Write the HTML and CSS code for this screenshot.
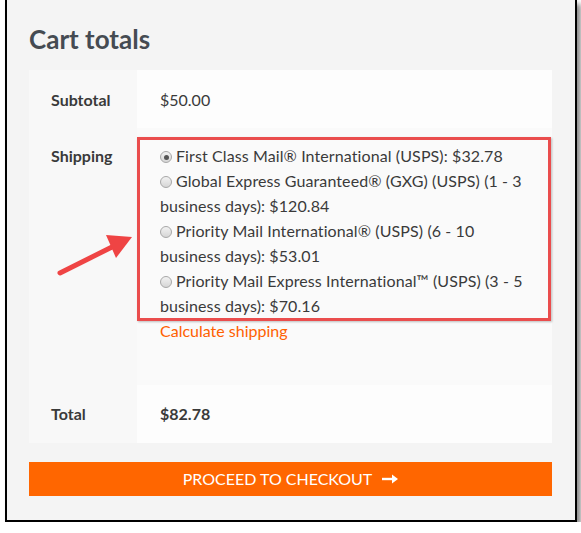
FILE: index.html
```html
<!DOCTYPE html>
<html>
<head>
<meta charset="utf-8">
<link rel="stylesheet" href="styles.css">
</head>
<body>
<div class="frame">
  <h2 class="title">Cart totals</h2>
  <table class="totals">
    <tr class="row">
      <th>Subtotal</th>
      <td>$50.00</td>
    </tr>
    <tr class="row ship">
      <th>Shipping</th>
      <td class="ship-cell">
        <ul class="methods">
          <li><input type="radio" name="m" checked><label>First Class Mail® International (USPS): $32.78</label></li>
          <li><input type="radio" name="m"><label>Global Express Guaranteed® (GXG) (USPS) (1 - 3 business days): $120.84</label></li>
          <li><input type="radio" name="m"><label>Priority Mail International® (USPS) (6 - 10 business days): $53.01</label></li>
          <li><input type="radio" name="m"><label>Priority Mail Express International™ (USPS) (3 - 5 business days): $70.16</label></li>
        </ul>
        <a class="calc" href="#">Calculate shipping</a>
        <div class="highlight"></div>
        <svg class="pointer" width="90" height="60" viewBox="0 0 90 60">
          <line x1="6" y1="48" x2="58" y2="22" stroke="#ef4444" stroke-width="5" stroke-linecap="round"/>
          <polygon points="78,12 52,10 62,33" fill="#ef4444"/>
        </svg>
      </td>
    </tr>
    <tr class="row">
      <th>Total</th>
      <td><strong>$82.78</strong></td>
    </tr>
  </table>
  <a class="checkout" href="#">PROCEED TO CHECKOUT
    <svg class="arr" width="16" height="10" viewBox="0 0 16 10"><path d="M0 5H12" stroke="#fff" stroke-width="2.4"/><path d="M10 0.5L16 5L10 9.5Z" fill="#fff"/></svg>
  </a>
</div>
</body>
</html>
```
FILE: styles.css
```css
html, body {
  margin: 0;
  padding: 0;
  background: #ffffff;
}
body {
  font-family: Lato, "Open Sans", sans-serif;
  color: #3a3a3a;
}
.frame {
  margin-left: 5px;
  background: #f4f4f4;
  border: 2px solid #000;
  border-top: none;
  box-shadow: 4px 4px 5px rgba(0,0,0,0.45);
  padding: 0 23px 0 22px;
  box-sizing: border-box;
  width: 572px;
  height: 522px;
}
.title {
  margin: 0;
  padding-top: 22px;
  height: 70px;
  box-sizing: border-box;
  font-size: 26px;
  line-height: 34px;
  font-weight: 700;
  color: #454b52;
}
.totals {
  width: 100%;
  border-collapse: collapse;
  font-size: 16px;
  line-height: 25px;
}
.totals th {
  width: 108px;
  box-sizing: border-box;
  text-align: left;
  vertical-align: top;
  padding: 16.5px 0 16.5px 22px;
  background: #f8f8f8;
  font-weight: 700;
}
.totals td {
  vertical-align: top;
  padding: 16.5px 0 16.5px 23px;
  background: #fdfdfd;
}
.row.ship th, .row.ship td {
  padding-top: 15px;
  padding-bottom: 41.5px;
  background: #fafafa;
}
.row.ship th { background: #f8f8f8; }
.ship-cell {
  position: relative;
}
.methods {
  list-style: none;
  margin: 0;
  padding: 0 16px 0 0;
  letter-spacing: 0.1px;
}
.methods li {
  margin: 0;
}
.methods input {
  -webkit-appearance: none;
  appearance: none;
  margin: 0 4px 0 0;
  width: 12px;
  height: 12px;
  border-radius: 50%;
  border: 1px solid #a8a8a8;
  background: linear-gradient(#f2f2f2, #d6d6d6);
  box-sizing: border-box;
  vertical-align: -1px;
  position: relative;
}
.methods input:checked::after {
  content: "";
  position: absolute;
  left: 2.5px;
  top: 2.5px;
  width: 5px;
  height: 5px;
  border-radius: 50%;
  background: #555;
}
.calc {
  color: #ff6000;
  text-decoration: none;
}
.highlight {
  position: absolute;
  left: 0;
  top: 9px;
  width: 414px;
  height: 184px;
  border: 3px solid #ea4d4d;
  box-sizing: border-box;
  box-shadow: 1px 1px 2px rgba(0,0,0,0.25);
}
.pointer {
  position: absolute;
  left: -83px;
  top: 97px;
}
.totals strong { font-weight: 700; }
.checkout {
  display: flex;
  align-items: center;
  justify-content: center;
  margin-top: 19px;
  height: 34px;
  background: #ff6600;
  color: #fff;
  text-decoration: none;
  font-size: 16px;
}
.arr {
  margin-left: 10px;
}
```
